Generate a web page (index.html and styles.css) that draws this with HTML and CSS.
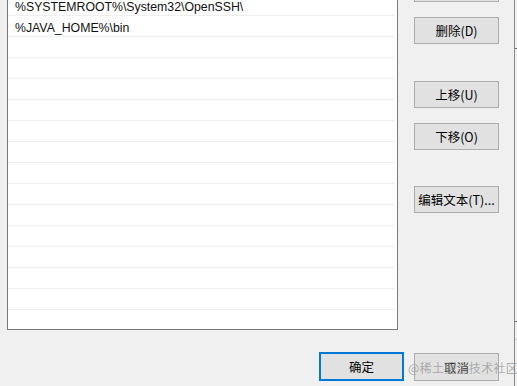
FILE: index.html
```html
<!DOCTYPE html>
<html lang="zh-CN">
<head>
  <meta charset="UTF-8" />
  <title>编辑环境变量</title>
  <link rel="stylesheet" href="styles.css">
</head>
<body>
  <div class="dialog">
    <div class="main">
      <div class="path-list">
        <div class="row">%SYSTEMROOT%\System32\OpenSSH\</div>
        <div class="row">%JAVA_HOME%\bin</div>
        <div class="row"></div>
        <div class="row"></div>
        <div class="row"></div>
        <div class="row"></div>
        <div class="row"></div>
        <div class="row"></div>
        <div class="row"></div>
        <div class="row"></div>
        <div class="row"></div>
        <div class="row"></div>
        <div class="row"></div>
        <div class="row"></div>
        <div class="row"></div>
      </div>
      <div class="side">
        <button class="btn btn-browse">浏览(B)...</button>
        <button class="btn btn-delete">删除(D)</button>
        <button class="btn btn-up">上移(U)</button>
        <button class="btn btn-down">下移(O)</button>
        <button class="btn btn-edit">编辑文本(T)...</button>
      </div>
    </div>
    <div class="footer">
      <button class="btn btn-ok">确定</button>
      <button class="btn btn-cancel">取消</button>
    </div>
  </div>
  <div class="edge">
    <span class="tick tick-1"></span>
    <span class="tick tick-2"></span>
    <span class="tick tick-3"></span>
  </div>
  <div class="watermark">@稀土掘金技术社区</div>
</body>
</html>
```

FILE: styles.css
```css
body {
  margin: 0;
  height: 386px;
  overflow: hidden;
  background: #f0f0f0;
  font-family: "Liberation Sans", "Noto Sans CJK SC", sans-serif;
  font-size: 12.3px;
  color: #111;
  display: flex;
  position: relative;
}
.dialog {
  width: 514px;
  display: flex;
  flex-direction: column;
}
.main {
  display: flex;
  margin-top: -6px;
  padding-left: 7px;
}
.path-list {
  width: 389px;
  height: 334px;
  background: #fff;
  border: 1px solid #7a7a7a;
  overflow: hidden;
}
.row {
  height: 20px;
  line-height: 24px;
  border-bottom: 1px solid #efefef;
  padding-left: 7px;
  margin-right: 2px;
  white-space: nowrap;
}
.side {
  display: flex;
  flex-direction: column;
  margin-left: 16px;
}
.btn {
  width: 85px;
  height: 27px;
  padding: 0;
  background: #e1e1e1;
  border: 1px solid #adadad;
  font-family: "Noto Sans CJK SC", "Liberation Sans", sans-serif;
  font-size: 12.5px;
  color: #000;
}
.btn-browse { margin-top: -19px; }
.btn-delete { margin-top: 15px; }
.btn-up { margin-top: 37px; }
.btn-down { margin-top: 15px; }
.btn-edit { margin-top: 36px; }
.footer {
  display: flex;
  justify-content: flex-end;
  gap: 10px;
  margin-top: 22px;
  padding-right: 15px;
}
.btn-ok {
  height: 29px;
  border: 2px solid #0078d7;
}
.btn-cancel {
  margin-top: 1px;
  height: 28px;
  color: #333;
}
.edge {
  width: 2px;
  border-left: 1px solid #8a8a8a;
  position: relative;
}
.tick {
  position: absolute;
  left: 0;
  width: 3px;
  height: 1px;
  background: #6a6a6a;
}
.tick-1 { top: 48px; }
.tick-2 { top: 321px; }
.tick-3 { top: 339px; background: #c8c8c8; }
.watermark {
  position: absolute;
  left: 408px;
  top: 359px;
  font-family: "Noto Sans CJK SC", sans-serif;
  font-size: 12px;
  letter-spacing: 0.3px;
  color: rgba(150, 150, 150, 0.75);
  white-space: nowrap;
}
```
